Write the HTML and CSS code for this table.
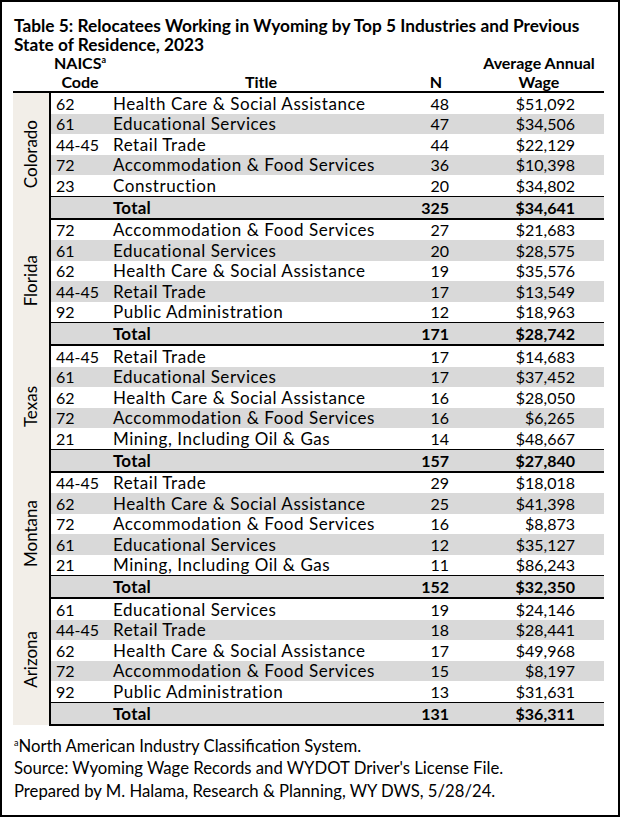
FILE: index.html
```html
<!DOCTYPE html>
<html lang="en">
<head>
<meta charset="utf-8">
<title>Table 5</title>
<link rel="stylesheet" href="styles.css">
</head>
<body>
<div class="frame">
  <h1 class="title">Table 5: Relocatees Working in Wyoming by Top 5 Industries and Previous<br>State of Residence, 2023</h1>
  <table class="data">
    <colgroup><col class="c-state"><col class="c-code"><col class="c-title"><col class="c-n"><col class="c-wage"></colgroup>
    <thead>
      <tr><th class="h-state"></th><th class="h-code">NAICS<sup>a</sup><br>Code</th><th class="h-title">Title</th><th class="h-n">N</th><th class="h-wage">Average Annual<br>Wage</th></tr>
    </thead>
    <tbody>
      <tr><td class="state" rowspan="6"><span>Colorado</span></td><td class="code">62</td><td class="name">Health Care &amp; Social Assistance</td><td class="n">48</td><td class="wage">$51,092</td></tr>
      <tr class="alt"><td class="code">61</td><td class="name">Educational Services</td><td class="n">47</td><td class="wage">$34,506</td></tr>
      <tr><td class="code">44-45</td><td class="name">Retail Trade</td><td class="n">44</td><td class="wage">$22,129</td></tr>
      <tr class="alt"><td class="code">72</td><td class="name">Accommodation &amp; Food Services</td><td class="n">36</td><td class="wage">$10,398</td></tr>
      <tr><td class="code">23</td><td class="name">Construction</td><td class="n">20</td><td class="wage">$34,802</td></tr>
      <tr class="total"><td class="code"></td><td class="name">Total</td><td class="n">325</td><td class="wage">$34,641</td></tr>
    </tbody>
    <tbody>
      <tr><td class="state" rowspan="6"><span>Florida</span></td><td class="code">72</td><td class="name">Accommodation &amp; Food Services</td><td class="n">27</td><td class="wage">$21,683</td></tr>
      <tr class="alt"><td class="code">61</td><td class="name">Educational Services</td><td class="n">20</td><td class="wage">$28,575</td></tr>
      <tr><td class="code">62</td><td class="name">Health Care &amp; Social Assistance</td><td class="n">19</td><td class="wage">$35,576</td></tr>
      <tr class="alt"><td class="code">44-45</td><td class="name">Retail Trade</td><td class="n">17</td><td class="wage">$13,549</td></tr>
      <tr><td class="code">92</td><td class="name">Public Administration</td><td class="n">12</td><td class="wage">$18,963</td></tr>
      <tr class="total"><td class="code"></td><td class="name">Total</td><td class="n">171</td><td class="wage">$28,742</td></tr>
    </tbody>
    <tbody>
      <tr><td class="state" rowspan="6"><span>Texas</span></td><td class="code">44-45</td><td class="name">Retail Trade</td><td class="n">17</td><td class="wage">$14,683</td></tr>
      <tr class="alt"><td class="code">61</td><td class="name">Educational Services</td><td class="n">17</td><td class="wage">$37,452</td></tr>
      <tr><td class="code">62</td><td class="name">Health Care &amp; Social Assistance</td><td class="n">16</td><td class="wage">$28,050</td></tr>
      <tr class="alt"><td class="code">72</td><td class="name">Accommodation &amp; Food Services</td><td class="n">16</td><td class="wage">$6,265</td></tr>
      <tr><td class="code">21</td><td class="name">Mining, Including Oil &amp; Gas</td><td class="n">14</td><td class="wage">$48,667</td></tr>
      <tr class="total"><td class="code"></td><td class="name">Total</td><td class="n">157</td><td class="wage">$27,840</td></tr>
    </tbody>
    <tbody>
      <tr><td class="state" rowspan="6"><span>Montana</span></td><td class="code">44-45</td><td class="name">Retail Trade</td><td class="n">29</td><td class="wage">$18,018</td></tr>
      <tr class="alt"><td class="code">62</td><td class="name">Health Care &amp; Social Assistance</td><td class="n">25</td><td class="wage">$41,398</td></tr>
      <tr><td class="code">72</td><td class="name">Accommodation &amp; Food Services</td><td class="n">16</td><td class="wage">$8,873</td></tr>
      <tr class="alt"><td class="code">61</td><td class="name">Educational Services</td><td class="n">12</td><td class="wage">$35,127</td></tr>
      <tr><td class="code">21</td><td class="name">Mining, Including Oil &amp; Gas</td><td class="n">11</td><td class="wage">$86,243</td></tr>
      <tr class="total"><td class="code"></td><td class="name">Total</td><td class="n">152</td><td class="wage">$32,350</td></tr>
    </tbody>
    <tbody>
      <tr><td class="state" rowspan="6"><span>Arizona</span></td><td class="code">61</td><td class="name">Educational Services</td><td class="n">19</td><td class="wage">$24,146</td></tr>
      <tr class="alt"><td class="code">44-45</td><td class="name">Retail Trade</td><td class="n">18</td><td class="wage">$28,441</td></tr>
      <tr><td class="code">62</td><td class="name">Health Care &amp; Social Assistance</td><td class="n">17</td><td class="wage">$49,968</td></tr>
      <tr class="alt"><td class="code">72</td><td class="name">Accommodation &amp; Food Services</td><td class="n">15</td><td class="wage">$8,197</td></tr>
      <tr><td class="code">92</td><td class="name">Public Administration</td><td class="n">13</td><td class="wage">$31,631</td></tr>
      <tr class="total"><td class="code"></td><td class="name">Total</td><td class="n">131</td><td class="wage">$36,311</td></tr>
    </tbody>
  </table>
  <div class="notes">
    <p><sup>a</sup>North American Industry Classification System.</p>
    <p>Source: Wyoming Wage Records and WYDOT Driver's License File.</p>
    <p>Prepared by M. Halama, Research &amp; Planning, WY DWS, 5/28/24.</p>
  </div>
</div>
</body>
</html>
```

FILE: styles.css
```css
html, body {
  margin: 0;
  padding: 0;
  background: #fff;
}
body {
  font-family: "Lato", "Open Sans", sans-serif;
  color: #000;
}
.frame {
  box-sizing: border-box;
  width: 620px;
  height: 817px;
  border: 2px solid #000;
  padding: 14px 15px 0 11px;
}
.title {
  margin: 0;
  font-size: 17.3px;
  line-height: 19px;
  font-weight: 700;
  padding-left: 1px;
}
.data {
  width: 591px;
  table-layout: fixed;
  border-collapse: collapse;
  font-size: 16px;
}
.c-state { width: 37px; }
.c-code { width: 60px; }
.c-title { width: 302px; }
.c-n { width: 48px; }
.c-wage { width: 144px; }

thead th {
  font-weight: 700;
  font-size: 16px;
  line-height: 18.5px;
  vertical-align: bottom;
  text-align: center;
  padding: 0;
  border-bottom: 2px solid #000;
}
thead sup {
  font-size: 9px;
  vertical-align: 6px;
  line-height: 0;
}
.h-wage { padding-left: 14px; }

tbody td {
  height: 20.5px;
  padding: 0;
  line-height: 19px;
  white-space: nowrap;
}
tbody tr.total td {
  height: 21px;
}
tbody tr:last-child td {
  border-bottom: 2px solid #000;
}
td.state {
  background: #f2eee8;
  border-right: 2px solid #000;
  text-align: center;
  vertical-align: middle;
  font-size: 17px;
}
td.state span {
  display: inline-block;
  writing-mode: vertical-rl;
  transform: rotate(180deg);
  line-height: 20px;
}
td.code { padding-left: 5px; }
td.name {
  padding-left: 3px;
  font-size: 17px;
  letter-spacing: 0.55px;
}
td.n { text-align: right; padding-right: 11px; }
td.wage { text-align: right; padding-right: 29px; }
tr.alt td:not(.state) { background: #d9d9d9; }
tr.total td { background: #d9d9d9; font-weight: 700; border-top: 1px solid #000; }
tr.total td.name { letter-spacing: 0.2px; }

.notes {
  margin-top: 9px;
  padding-left: 1px;
  font-size: 16.7px;
  line-height: 22.5px;
}
.notes p { margin: 0; }
.notes sup {
  font-size: 9px;
  vertical-align: 6px;
  line-height: 0;
}
```
